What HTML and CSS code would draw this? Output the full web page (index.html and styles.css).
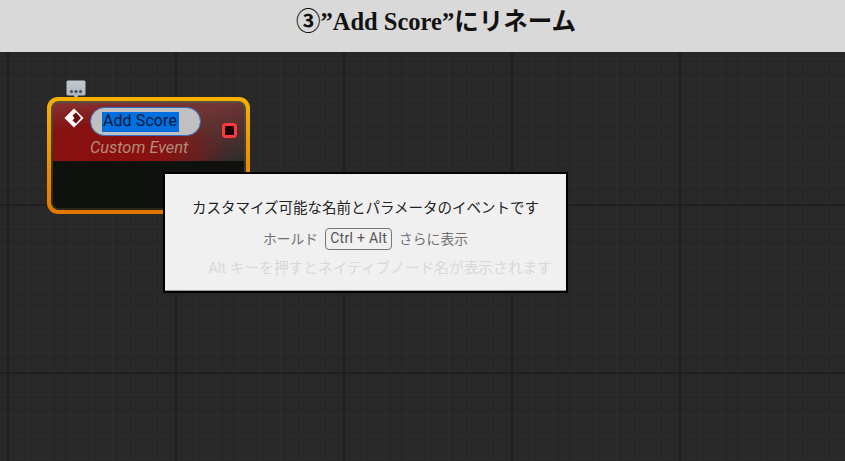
FILE: index.html
```html
<!DOCTYPE html>
<html lang="ja">
<head>
<meta charset="utf-8">
<title>Add Score</title>
<link rel="stylesheet" href="styles.css">
</head>
<body>
<div class="page">
  <header class="banner"><h1 class="banner-title">③”Add Score”にリネーム</h1></header>
  <main class="canvas">
    <div class="bubble">
      <svg class="bubble-icon" viewBox="0 0 20 19" width="20" height="19" aria-hidden="true">
        <defs><linearGradient id="bubbleFill" x1="0" y1="0" x2="0" y2="1"><stop offset="0" stop-color="#c3c9d0"/><stop offset="1" stop-color="#a9b0b8"/></linearGradient></defs>
        <path d="M2 0.5H18a1.5 1.5 0 0 1 1.500 1.500V14a1.500 1.500 0 0 1-1.500 1.500H12.500L10 18.500L7.500 15.500H2a1.500 1.500 0 0 1-1.500-1.500V2A1.500 1.500 0 0 1 2 0.500Z" fill="url(#bubbleFill)"/>
        <circle cx="5.500" cy="11.500" r="1.500" fill="#3d4a5a"/><circle cx="10" cy="11.500" r="1.500" fill="#3d4a5a"/><circle cx="14.500" cy="11.500" r="1.500" fill="#3d4a5a"/>
      </svg>
    </div>
    <section class="node">
      <div class="node-inner">
        <div class="node-head">
          <svg class="event-icon" viewBox="0 0 20 20" width="20" height="20" aria-hidden="true">
            <path d="M10 0.500L19.500 10L10 19.500L0.500 10Z" fill="#fff"/>
            <path d="M12 4.500L17 10L12 15.500L8.500 12.500L10.500 10L8.500 7.500Z" fill="#6a0e0e"/>
          </svg>
          <div class="name-col">
            <div class="name-pill"><span class="name-sel">Add Score</span></div>
            <div class="node-sub">Custom Event</div>
          </div>
          <span class="pin"></span>
        </div>
        <div class="node-body"></div>
      </div>
    </section>
    <aside class="tip">
      <p class="tip-title">カスタマイズ可能な名前とパラメータのイベントです</p>
      <p class="tip-hold">ホールド<kbd class="key">Ctrl + Alt</kbd>さらに表示</p>
      <p class="tip-alt">Alt キーを押すとネイティブノード名が表示されます</p>
    </aside>
  </main>
</div>
</body>
</html>
```
FILE: styles.css
```css
* { box-sizing: border-box; }
html, body { margin: 0; height: 100%; }
body { background: #282828; overflow: hidden; }
.page { display: flex; flex-direction: column; width: 845px; height: 461px; }
.banner {
  flex: 0 0 52px;
  display: flex;
  align-items: center;
  justify-content: center;
  padding: 0 0 7px 27px;
  background: #d9d9d9;
}
.banner-title {
  margin: 0;
  font: 700 24.500px/1 "Liberation Serif", "Noto Sans CJK JP", serif;
  color: #111;
  white-space: nowrap;
}
.canvas {
  position: relative;
  flex: 1;
  background-color: #282828;
  background-image:
    linear-gradient(to bottom, #1f1f1f 2px, transparent 2px),
    linear-gradient(to right, #1f1f1f 2px, transparent 2px),
    linear-gradient(to bottom, #2d2d2d 1px, transparent 1px),
    linear-gradient(to right, #2d2d2d 1px, transparent 1px);
  background-size: 168px 168px, 168px 168px, 21px 21px, 21px 21px;
  background-position: 0 152px, 7px 0, 0 6px, 7px 0;
}
.bubble { position: absolute; left: 66px; top: 28px; line-height: 0; }
.node {
  position: absolute;
  left: 47px;
  top: 45px;
  width: 203px;
  height: 117px;
  padding: 4px;
  border-radius: 11px;
  background: linear-gradient(#f7b000, #e07800);
}
.node-inner {
  display: flex;
  flex-direction: column;
  height: 100%;
  padding: 2px;
  border-radius: 8px;
  background: linear-gradient(#56503f, #2a2518);
}
.node-head {
  position: relative;
  flex: 0 0 58px;
  display: flex;
  align-items: flex-start;
  padding: 4px 7px 0 11px;
  border-radius: 6px 6px 0 0;
  background:
    radial-gradient(130px 52px at 24% 85%, #8d0e10 0%, #861212 50%, rgba(134, 18, 18, 0) 100%),
    linear-gradient(160deg, #8a3030 0%, #703434 50%, #2e2c2a 100%);
}
.event-icon { margin-top: 1px; flex: none; }
.name-col { display: flex; flex-direction: column; margin-left: 6px; flex: none; width: 111px; }
.name-pill {
  width: 111px;
  height: 29px;
  display: flex;
  align-items: center;
  padding: 0 0 0 10.500px;
  border: 1.500px solid #2d6fc4;
  border-radius: 15px;
  background: #c0c0c0;
}
.name-sel {
  width: 77px;
  height: 20px;
  font: 400 16px/18px Roboto, sans-serif;
  letter-spacing: 0.100px;
  text-align: center;
  color: #04193a;
  background: #0070e0;
  white-space: nowrap;
}
.node-sub {
  margin-top: 3px;
  font: italic 400 16.400px/18px Roboto, sans-serif;
  color: #b18c78;
  white-space: nowrap;
}
.pin {
  width: 15px;
  height: 15px;
  margin: 16px 0 0 21px;
  flex: none;
  border: 3px solid #ff3a3e;
  border-radius: 4px;
  background: #1c0208;
}
.node-body {
  flex: 1;
  border-radius: 0 0 6px 6px;
  background: #0f110f;
}
.tip {
  position: absolute;
  left: 163px;
  top: 120px;
  width: 405px;
  height: 121px;
  display: flex;
  flex-direction: column;
  align-items: center;
  padding-top: 25px;
  border: 2px solid #000;
  background: #f0f0f0;
  box-shadow: inset 0 -1px 0 #9a9a9a;
}
.tip p { margin: 0; white-space: nowrap; font-family: Roboto, "Noto Sans CJK JP", sans-serif; }
.tip-title { font-size: 14.500px; line-height: 20px; color: #222; }
.tip-hold {
  display: flex;
  align-items: center;
  gap: 7px;
  margin-top: 9px !important;
  font-size: 13.800px;
  line-height: 22px;
  color: #707070;
}
.key {
  height: 22px;
  padding: 0 4px;
  border: 1.500px solid #777;
  border-radius: 4px;
  font: 400 14px/19px Roboto, sans-serif;
  letter-spacing: 0.300px;
  color: #555;
}
.tip-alt {
  margin-top: 8px !important;
  padding-left: 29px;
  font-size: 14.700px;
  line-height: 20px;
  color: #d8d8d8;
}
```
